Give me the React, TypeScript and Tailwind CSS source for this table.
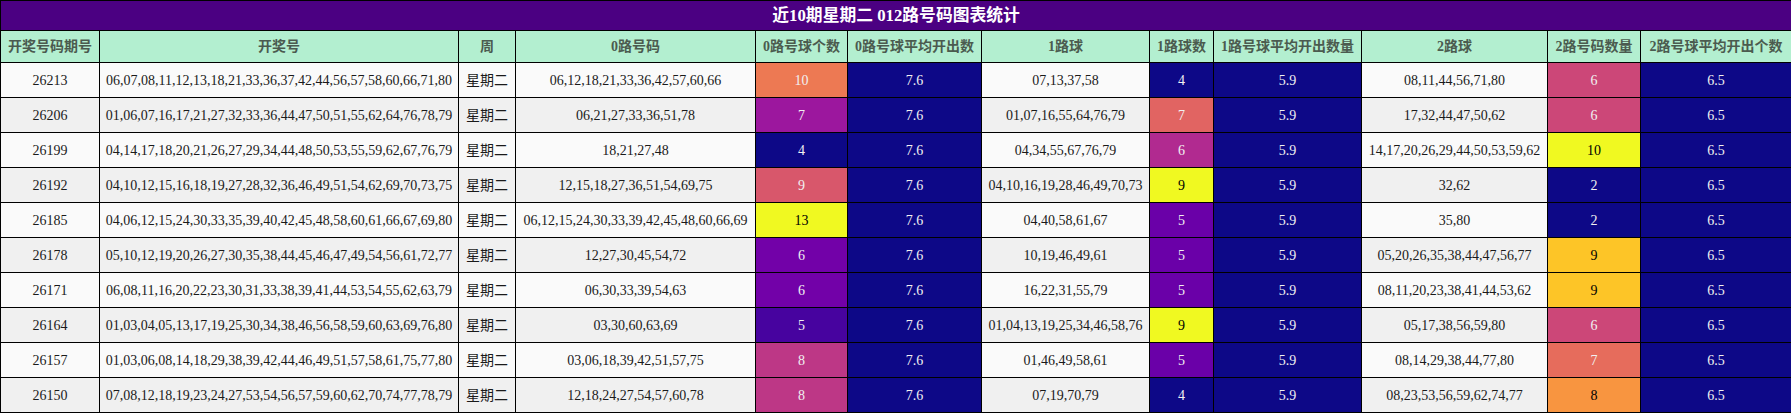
import React from "react";

type Row = {
  id: string;
  nums: string;
  r0: string;
  c0: number;
  r1: string;
  c1: number;
  r2: string;
  c2: number;
};

const rows: Row[] = [
  { id: "26213", nums: "06,07,08,11,12,13,18,21,33,36,37,42,44,56,57,58,60,66,71,80", r0: "06,12,18,21,33,36,42,57,60,66", c0: 10, r1: "07,13,37,58", c1: 4, r2: "08,11,44,56,71,80", c2: 6 },
  { id: "26206", nums: "01,06,07,16,17,21,27,32,33,36,44,47,50,51,55,62,64,76,78,79", r0: "06,21,27,33,36,51,78", c0: 7, r1: "01,07,16,55,64,76,79", c1: 7, r2: "17,32,44,47,50,62", c2: 6 },
  { id: "26199", nums: "04,14,17,18,20,21,26,27,29,34,44,48,50,53,55,59,62,67,76,79", r0: "18,21,27,48", c0: 4, r1: "04,34,55,67,76,79", c1: 6, r2: "14,17,20,26,29,44,50,53,59,62", c2: 10 },
  { id: "26192", nums: "04,10,12,15,16,18,19,27,28,32,36,46,49,51,54,62,69,70,73,75", r0: "12,15,18,27,36,51,54,69,75", c0: 9, r1: "04,10,16,19,28,46,49,70,73", c1: 9, r2: "32,62", c2: 2 },
  { id: "26185", nums: "04,06,12,15,24,30,33,35,39,40,42,45,48,58,60,61,66,67,69,80", r0: "06,12,15,24,30,33,39,42,45,48,60,66,69", c0: 13, r1: "04,40,58,61,67", c1: 5, r2: "35,80", c2: 2 },
  { id: "26178", nums: "05,10,12,19,20,26,27,30,35,38,44,45,46,47,49,54,56,61,72,77", r0: "12,27,30,45,54,72", c0: 6, r1: "10,19,46,49,61", c1: 5, r2: "05,20,26,35,38,44,47,56,77", c2: 9 },
  { id: "26171", nums: "06,08,11,16,20,22,23,30,31,33,38,39,41,44,53,54,55,62,63,79", r0: "06,30,33,39,54,63", c0: 6, r1: "16,22,31,55,79", c1: 5, r2: "08,11,20,23,38,41,44,53,62", c2: 9 },
  { id: "26164", nums: "01,03,04,05,13,17,19,25,30,34,38,46,56,58,59,60,63,69,76,80", r0: "03,30,60,63,69", c0: 5, r1: "01,04,13,19,25,34,46,58,76", c1: 9, r2: "05,17,38,56,59,80", c2: 6 },
  { id: "26157", nums: "01,03,06,08,14,18,29,38,39,42,44,46,49,51,57,58,61,75,77,80", r0: "03,06,18,39,42,51,57,75", c0: 8, r1: "01,46,49,58,61", c1: 5, r2: "08,14,29,38,44,77,80", c2: 7 },
  { id: "26150", nums: "07,08,12,18,19,23,24,27,53,54,56,57,59,60,62,70,74,77,78,79", r0: "12,18,24,27,54,57,60,78", c0: 8, r1: "07,19,70,79", c1: 4, r2: "08,23,53,56,59,62,74,77", c2: 8 },
];

// plasma gradient classes (background + text colour) for each column
const c0Cls: Record<number, string> = {
  4: "bg-[#0d0887] text-[#f1f1f1]",
  5: "bg-[#47039f] text-[#f1f1f1]",
  6: "bg-[#7201a8] text-[#f1f1f1]",
  7: "bg-[#9c179e] text-[#f1f1f1]",
  8: "bg-[#bd3786] text-[#f1f1f1]",
  9: "bg-[#d8576b] text-[#f1f1f1]",
  10: "bg-[#ed7953] text-[#f1f1f1]",
  13: "bg-[#f0f921] text-black",
};
const c1Cls: Record<number, string> = {
  4: "bg-[#0d0887] text-[#f1f1f1]",
  5: "bg-[#6a00a8] text-[#f1f1f1]",
  6: "bg-[#b12a90] text-[#f1f1f1]",
  7: "bg-[#e16462] text-[#f1f1f1]",
  9: "bg-[#f0f921] text-black",
};
const c2Cls: Record<number, string> = {
  2: "bg-[#0d0887] text-[#f1f1f1]",
  6: "bg-[#cc4778] text-[#f1f1f1]",
  7: "bg-[#e66c5c] text-[#f1f1f1]",
  8: "bg-[#f89540] text-black",
  9: "bg-[#fdc527] text-black",
  10: "bg-[#f0f921] text-black",
};

const headers = [
  "开奖号码期号",
  "开奖号",
  "周",
  "0路号码",
  "0路号球个数",
  "0路号球平均开出数",
  "1路球",
  "1路球数",
  "1路号球平均开出数量",
  "2路球",
  "2路号码数量",
  "2路号球平均开出个数",
];

const widths = [99, 359, 57, 240, 92, 134, 168, 64, 148, 186, 93, 151];

const td = "border border-black text-center whitespace-nowrap p-0";
const avg = "bg-[#0d0887] text-[#f1f1f1]";

export default function App() {
  return (
    <div className="w-[1791px] bg-white font-['Liberation_Serif','Noto_Sans_CJK_SC',serif]">
      <table className="w-full table-fixed border-collapse text-[14px]">
        <colgroup>
          {widths.map((w, i) => (
            <col key={i} style={{ width: w }} />
          ))}
        </colgroup>
        <thead>
          <tr className="h-[30px]">
            <th
              colSpan={12}
              className="border border-black bg-[#4b0082] text-white text-[16.8px] font-bold text-center p-0"
            >
              近10期星期二 012路号码图表统计
            </th>
          </tr>
          <tr className="h-[32px]">
            {headers.map((h) => (
              <th
                key={h}
                className="border border-black bg-[#b3efd0] text-[#4b5b4f] font-bold text-center whitespace-nowrap p-0"
              >
                {h}
              </th>
            ))}
          </tr>
        </thead>
        <tbody>
          {rows.map((r, i) => {
            const bg = i % 2 === 0 ? "bg-[#fafafa]" : "bg-[#f0f0f0]";
            return (
              <tr key={r.id} className={`h-[35px] text-[#1a1a1a] ${bg}`}>
                <td className={td}>{r.id}</td>
                <td className={td}>{r.nums}</td>
                <td className={td}>星期二</td>
                <td className={td}>{r.r0}</td>
                <td className={`${td} ${c0Cls[r.c0]}`}>{r.c0}</td>
                <td className={`${td} ${avg}`}>7.6</td>
                <td className={td}>{r.r1}</td>
                <td className={`${td} ${c1Cls[r.c1]}`}>{r.c1}</td>
                <td className={`${td} ${avg}`}>5.9</td>
                <td className={td}>{r.r2}</td>
                <td className={`${td} ${c2Cls[r.c2]}`}>{r.c2}</td>
                <td className={`${td} ${avg}`}>6.5</td>
              </tr>
            );
          })}
        </tbody>
      </table>
    </div>
  );
}
